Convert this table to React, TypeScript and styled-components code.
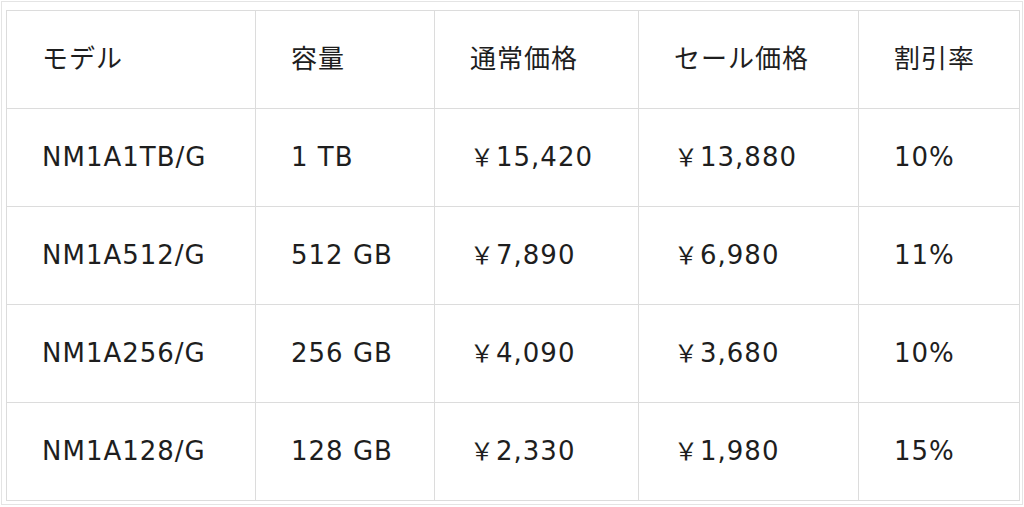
import styled, { createGlobalStyle } from "styled-components";

const GlobalStyle = createGlobalStyle`
  html, body {
    margin: 0;
    padding: 0;
    background: #fff;
  }
`;

type Row = {
  model: string;
  capacity: string;
  price: string;
  sale: string;
  rate: string;
};

const rows: Row[] = [
  { model: "NM1A1TB/G", capacity: "1 TB", price: "15,420", sale: "13,880", rate: "10%" },
  { model: "NM1A512/G", capacity: "512 GB", price: "7,890", sale: "6,980", rate: "11%" },
  { model: "NM1A256/G", capacity: "256 GB", price: "4,090", sale: "3,680", rate: "10%" },
  { model: "NM1A128/G", capacity: "128 GB", price: "2,330", sale: "1,980", rate: "15%" },
];

const colWidths = [249, 179, 204, 220, 161];

const App = () => {
  return (
    <>
      <GlobalStyle />
      <Frame>
        <PriceTable>
          <colgroup>
            {colWidths.map((w, i) => (
              <col key={i} style={{ width: w }} />
            ))}
          </colgroup>
          <thead>
            <tr>
              <Cell as="th">モデル</Cell>
              <Cell as="th">容量</Cell>
              <Cell as="th">通常価格</Cell>
              <Cell as="th">セール価格</Cell>
              <Cell as="th">割引率</Cell>
            </tr>
          </thead>
          <tbody>
            {rows.map((r) => (
              <tr key={r.model}>
                <Cell>{r.model}</Cell>
                <Cell>{r.capacity}</Cell>
                <Cell>
                  <Yen>￥</Yen>
                  {r.price}
                </Cell>
                <Cell>
                  <Yen>￥</Yen>
                  {r.sale}
                </Cell>
                <Cell>{r.rate}</Cell>
              </tr>
            ))}
          </tbody>
        </PriceTable>
      </Frame>
    </>
  );
};

export default App;

const Frame = styled.div`
  box-sizing: border-box;
  width: 1022px;
  height: 504px;
  margin: 1px 0 0 1px;
  border: 1px solid #e4e4e4;
  padding: 8px 0 0 4px;
`;

const PriceTable = styled.table`
  border-collapse: collapse;
  table-layout: fixed;
  width: 1013px;
  font-family: "DejaVu Sans", "Noto Sans CJK JP", sans-serif;
  font-size: 26px;
  line-height: 1.2;
  color: #1e1e1e;
`;

const Cell = styled.td`
  box-sizing: border-box;
  height: 98px;
  padding: 0 0 0 35px;
  border: 1.5px solid #dcdcdc;
  text-align: left;
  vertical-align: middle;
  font-weight: normal;
  letter-spacing: 1px;
  white-space: nowrap;
`;

const Yen = styled.span`
  font-family: "Noto Sans CJK JP", sans-serif;
  font-size: 24px;
  letter-spacing: 0;
  margin-right: 2px;
`;
